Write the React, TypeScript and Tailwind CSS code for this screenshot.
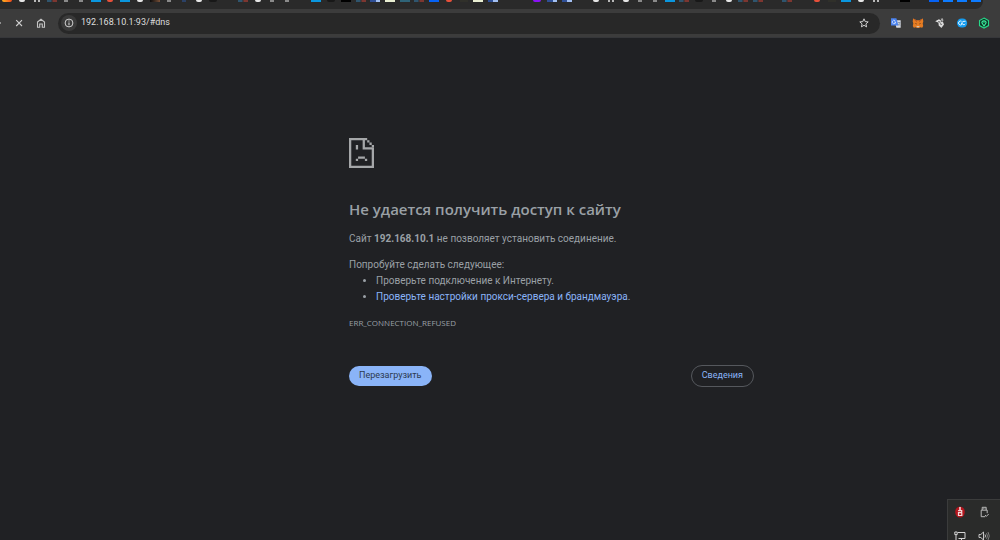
import type { ReactNode } from 'react';

// One entry per tab; 'none' keeps the slot empty.
const tabs = [
  'fire', 'white', 'dots', 'duo', 'grey', 'grey', 'sky', 'red', 'sky', 'white',
  'brown', 'grey', 'navy', 'white', 'dark', 'none', 'duo', 'white', 'grey', 'grey',
  'none', 'sky', 'dark', 'black', 'duo', 'translate', 'cream', 'teal', 'duo', 'blue',
  'red', 'olive', 'cream', 'translate', 'none', 'none', 'purple', 'translate', 'translate', 'none',
  'white', 'dots', 'white', 'grey', 'grey', 'sky', 'duo', 'dark', 'grey', 'white',
  'duo', 'duo', 'none', 'duo', 'none', 'red', 'olive', 'sky', 'white', 'dots',
  'none', 'black', 'none',
];

const pinnedTabs = ['blue', 'azure', 'azure', 'azure'];

const favicons: Record<string, string> = {
  fire: 'w-2.5 rounded-b-sm bg-linear-to-r from-[#ffb01f] to-[#f0441c]',
  white: 'w-1.5 rounded-b-full bg-[#e6e6e6]',
  dots: 'w-1.5 border-x-2 border-[#b9b9b9] bg-[#2b2b2b]',
  duo: 'w-2.5 bg-linear-to-r from-[#2f556e] from-40% via-[#2b2b2b] to-[#7d3630] to-60%',
  grey: 'w-1 bg-[#8a8a8a]',
  sky: 'w-2.5 bg-[#0a96de]',
  red: 'w-1.5 rounded-b-full bg-[#e8503a]',
  brown: 'w-2.5 bg-linear-to-r from-[#0c0c0c] to-[#7a5138]',
  navy: 'w-1 bg-[#2b4166]',
  dark: 'w-2 rounded-b-full bg-[#181818]',
  black: 'w-2.5 bg-black',
  translate: 'w-2.5 bg-linear-to-r from-[#2f4f96] from-55% to-[#a3c0f2] to-55%',
  cream: 'w-2.5 bg-[#e9eed2]',
  teal: 'w-2.5 bg-[#2f6478]',
  blue: 'w-2.5 bg-[#0662f5]',
  azure: 'w-2.5 bg-[#0d7bff]',
  olive: 'w-2 bg-[#30302a]',
  purple: 'w-2 rounded-b-sm bg-[#8a12f5]',
  none: 'w-0',
};

function TabStrip() {
  return (
    <div className="mr-[17px] flex h-[9px] rounded-br-lg bg-[#2a2a2a]">
      <div className="flex flex-1">
        {tabs.map((kind, i) => (
          <div key={i} className="flex flex-1 justify-center">
            <span className={`h-0.5 ${favicons[kind]}`} />
          </div>
        ))}
      </div>
      {pinnedTabs.map((kind, i) => (
        <div key={i} className="flex w-3.5 justify-center">
          <span className={`h-0.5 ${favicons[kind]}`} />
        </div>
      ))}
    </div>
  );
}

function IconButton({ label, children }: { label: string; children: ReactNode }) {
  return (
    <button type="button" aria-label={label} className="flex size-3 shrink-0 items-center justify-center">
      {children}
    </button>
  );
}

function Toolbar() {
  return (
    <div className="flex h-[29px] items-center border-b border-[#36373a] bg-[#3c3c3c]">
      <span className="h-0.5 w-px bg-[#8f8f8f]" />
      <div className="ml-3 flex items-center gap-2.5">
        <IconButton label="Остановить загрузку">
          <svg viewBox="0 0 12 12" className="size-3" fill="none" stroke="#d0d0d0" strokeWidth="1.1">
            <path d="M3.2 3.2l5.8 5.8M9 3.2L3.2 9" />
          </svg>
        </IconButton>
        <IconButton label="Главная страница">
          <svg viewBox="0 0 12 12" className="size-3" fill="none" stroke="#c4c4c4" strokeWidth="1.1">
            <path d="M2.5 5L6 2.2 9.5 5v5.2H7.3V7H4.7v3.2H2.5z" />
          </svg>
        </IconButton>
      </div>
      <form className="ml-[11px] flex h-[21px] flex-1 items-center rounded-full bg-[#282828] pr-2.5 pl-[3px]">
        <button
          type="button"
          aria-label="Сведения о сайте"
          className="flex size-4 shrink-0 items-center justify-center rounded-full bg-[#3a3a3a]"
        >
          <svg viewBox="0 0 12 12" className="size-3" fill="none" stroke="#d0d0d0">
            <circle cx="6" cy="6" r="3.9" />
            <path d="M6 5.4v2.8M6 3.6v1" strokeWidth="1.1" />
          </svg>
        </button>
        <input
          aria-label="Адресная строка"
          defaultValue="192.168.10.1:93/#dns"
          spellCheck={false}
          className="ml-1 min-w-0 flex-1 bg-transparent font-[family-name:Roboto,'Liberation_Sans',sans-serif] text-[9px] text-[#dedede] outline-none"
        />
        <IconButton label="Добавить в закладки">
          <svg viewBox="0 0 12 12" className="size-3" fill="none" stroke="#cfcfcf">
            <path d="M6 1.8l1.2 2.8 3 .3-2.3 2 .7 3L6 8.3 3.4 9.9l.7-3-2.3-2 3-.3z" />
          </svg>
        </IconButton>
      </form>
      <Extensions />
    </div>
  );
}

function Extensions() {
  return (
    <div className="mr-2.5 ml-2.5 flex items-center gap-2.5">
      <IconButton label="Переводчик">
        <svg viewBox="0 0 12 12" className="size-3">
          <path d="M4.5 3.2h6.2v7.6H6.4z" fill="#d7dbe2" />
          <path d="M1 1.2h5.4l2 7.2H1z" fill="#4a82ee" />
          <path d="M5.2 3.8A1.7 1.7 0 1 0 5.7 5H4.2" fill="none" stroke="#dce8ff" strokeWidth=".8" />
          <path d="M7.7 5.5h2.6M9.6 5.5c-.2 1.5-.8 2.3-1.4 3M8.3 6.8l1.8 1.9" fill="none" stroke="#71839e" strokeWidth=".7" />
        </svg>
      </IconButton>
      <IconButton label="Кошелёк">
        <svg viewBox="0 0 12 12" className="size-3">
          <path d="M1.1 1.5l3.5 1.7h2.8l3.5-1.7.4 3-.6 2 .5 2.4-1 1.8-2.2-.5-.8.7H4.8l-.8-.7-2.2.5-1-1.8.5-2.4-.6-2z" fill="#e57c22" />
          <path d="M1.1 1.5l3.5 1.7.5 2.3zM10.9 1.5L7.4 3.2l-.5 2.3z" fill="#b85722" />
          <path d="M2.8 6.3l1.6.3.3.8zM9.2 6.3l-1.6.3-.3.8z" fill="#38231a" />
          <path d="M4.5 9h3l-.3 1.2H4.8z" fill="#d9c4ad" />
        </svg>
      </IconButton>
      <IconButton label="Расширение">
        <svg viewBox="0 0 12 12" className="size-3">
          <path d="M1.2 4.2L5 2.3 7.6 4 5.2 6z" fill="#e4e4e4" />
          <path d="M6.6 1.8l2.2-.6.7 2.4-1.6 1z" fill="#a8a8a8" />
          <path d="M4.4 5.8L8.8 4.4l1.2 3.2-2.6 3.4-2.6-2.4z" fill="#dadada" />
          <path d="M6 6.7l1.8.8M4.2 4.6l2 .4" stroke="#343434" strokeWidth=".8" />
        </svg>
      </IconButton>
      <IconButton label="Синхронизация">
        <svg viewBox="0 0 12 12" className="size-3">
          <rect x="1" y="1.5" width="10.2" height="9" rx="4.5" fill="#159cf0" />
          <path d="M5.6 4.3a2 2 0 1 0 0 3.4V6.1M9.6 4.3H8a1.7 1.7 0 1 0 1.2 2.6" fill="none" stroke="#e1f5ff" strokeWidth="1" />
        </svg>
      </IconButton>
      <IconButton label="Защита">
        <svg viewBox="0 0 12 12" className="size-3">
          <path d="M6 1.1l4.5 2.5v5L6 11.1 1.5 8.6v-5z" fill="#0d3325" stroke="#27d989" strokeWidth="1.1" />
          <path d="M6 9L3.9 5.8A2.1 2.1 0 1 1 8.1 5.8z" fill="none" stroke="#3df2a0" strokeWidth="1.1" />
          <circle cx="6" cy="5" r=".8" fill="#3df2a0" />
        </svg>
      </IconButton>
    </div>
  );
}

function SadPage() {
  return (
    <svg viewBox="0 0 11 13" className="h-[30px] w-[25px]" fill="#a5a7a9" preserveAspectRatio="none" aria-hidden="true">
      <path d="M0 0h8v1H7v3h4v9H0zM1 1v11h9V5H6V1z" fillRule="evenodd" />
      <path d="M8 1h1v1H8zM9 2h1v1H9zM10 3h1v1h-1z" />
      <path d="M3 3h1v2H3zM4 8h3v1H4zM3 9h1v1H3zM7 9h1v1H7z" />
    </svg>
  );
}

function ErrorPage() {
  return (
    <main className="pt-[100px] pl-[103px] text-[#9aa0a6]">
      <div className="mx-auto max-w-[405px]">
        <SadPage />
        <h1 className="mt-[29px] text-[15px] leading-6 font-semibold">Не удается получить доступ к сайту</h1>
        <div className="font-[family-name:Roboto,'Liberation_Sans',sans-serif] text-[10px] leading-4">
          <p className="mt-2.5">
            Сайт <strong className="font-bold">192.168.10.1</strong> не позволяет установить соединение.
          </p>
          <p className="mt-2.5">Попробуйте сделать следующее:</p>
          <ul className="list-disc pl-[27px]">
            <li>Проверьте подключение к Интернету.</li>
            <li>
              <a href="#proxy" className="text-[#8ab4f8]">Проверьте настройки прокси-сервера и брандмауэра</a>.
            </li>
          </ul>
        </div>
        <p className="mt-2.5 text-[8px] leading-4">ERR_CONNECTION_REFUSED</p>
        <div className="mt-[34px] flex items-center justify-between font-[family-name:Roboto,'Liberation_Sans',sans-serif] text-[9px]">
          <button type="button" className="h-5 rounded-full bg-[#8ab4f8] px-2.5 text-[#2c3a50]">
            Перезагрузить
          </button>
          <button type="button" className="h-[22px] rounded-full border border-[#55585d] px-2.5 text-[#8ab4f8]">
            Сведения
          </button>
        </div>
      </div>
    </main>
  );
}

function TrayPopup() {
  return (
    <aside className="fixed right-0 bottom-0 grid h-[41px] w-[53px] grid-cols-[24px_24px] content-start gap-y-3 overflow-hidden border-t border-l border-[#3b3c3c] bg-[#2a2b2a] pt-1.5">
      <svg viewBox="0 0 12 12" className="mx-auto size-3">
        <ellipse cx="6" cy="6" rx="4.8" ry="5.6" fill="#b5161e" />
        <path d="M6 1v3" stroke="#f1dada" strokeWidth="1.6" />
        <path d="M4.1 4.7h3.6v2H4.5v2.8h3.3V7" fill="none" stroke="#f1dada" strokeWidth="1.2" />
      </svg>
      <svg viewBox="0 0 12 12" className="mx-auto size-3" fill="none" stroke="#c8c8c8" strokeWidth=".9">
        <path d="M4.2 4V1.3h4V4M3.2 4.2h6v3M3.2 4.2v6.5h4M5.4 2.4v.8M7 2.4v.8M7 9l1.3 1.4L10.7 8" />
      </svg>
      <svg viewBox="0 0 12 12" className="mx-auto size-3" fill="none" stroke="#d5d5d5">
        <path d="M4 2.5h7v6H4.5M.8 2h2.4v2.6H.8zM2 4.6v5.9M4.5 10.5h5M7.5 8.5v2" />
      </svg>
      <svg viewBox="0 0 12 12" className="mx-auto size-3" fill="none" stroke="#d5d5d5" strokeWidth=".9">
        <path d="M1 4.5h1.8L5.5 2v8L2.8 7.5H1z" />
        <path d="M7 4.5q1 1.5 0 3" />
        <path d="M8.5 3.2q2 2.8 0 5.6M10 2q2.6 4 0 8" stroke="#858585" />
      </svg>
    </aside>
  );
}

export default function App() {
  return (
    <div className="min-h-screen bg-[#202124] font-['Open_Sans','Noto_Sans',sans-serif]">
      <header className="bg-[#3c3c3c]">
        <TabStrip />
        <Toolbar />
      </header>
      <ErrorPage />
      <TrayPopup />
    </div>
  );
}
